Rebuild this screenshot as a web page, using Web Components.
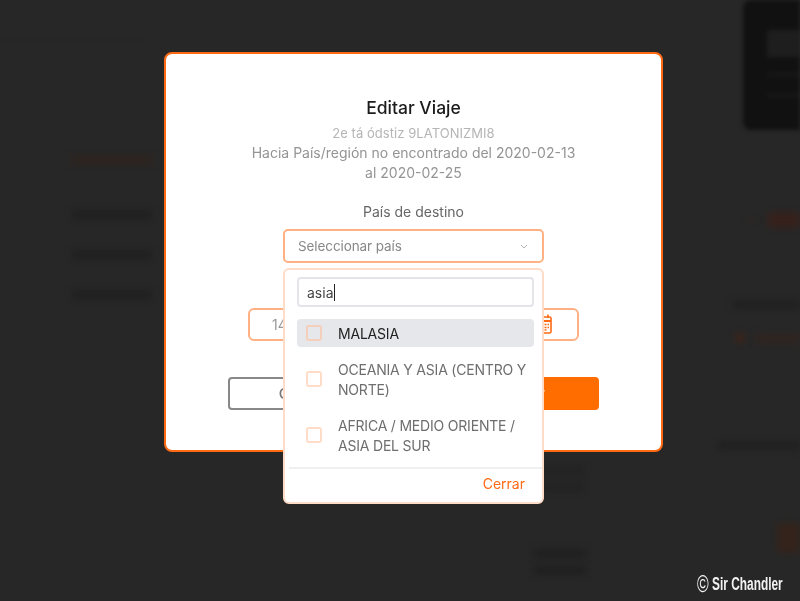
<!DOCTYPE html>
<html lang="es">
<head>
<meta charset="utf-8">
<title>Editar Viaje</title>
<style>
    html, body { margin: 0; height: 100%; background: #272727; overflow: hidden; }
    body { font-family: Inter, "Liberation Sans", sans-serif; }
</style>
</head>
<body>
<page-backdrop></page-backdrop>

<edit-trip-modal>
    <span slot="title">Editar Viaje</span>
    <span slot="who">2e tá ódstiz 9LATONIZMI8</span>
    <span slot="route">Hacia País/región no encontrado del 2020-02-13<br>al 2020-02-25</span>
    <span slot="label">País de destino</span>
    <country-select slot="select" placeholder="Seleccionar país" query="asia">
        <country-option active>MALASIA</country-option>
        <country-option>OCEANIA Y ASIA (CENTRO Y NORTE)</country-option>
        <country-option>AFRICA / MEDIO ORIENTE / ASIA DEL SUR</country-option>
    </country-select>
    <date-field slot="dates" value="14"></date-field>
    <trip-button slot="cancel">Cancelar</trip-button>
    <trip-button slot="save" primary>Guardar</trip-button>
</edit-trip-modal>

<photo-credit>Sir Chandler</photo-credit>

<script>
// Blurred page behind the dialog, only bars, no readable text
class PageBackdrop extends HTMLElement {
    constructor() {
        super();
        this.attachShadow({ mode: 'open' });
        this.shadowRoot.innerHTML = `
            <style>
                :host {
                    position: fixed;
                    inset: 0;
                    display: flex;
                    justify-content: space-between;
                    background: #272727;
                    overflow: hidden;
                }
                .bar { filter: blur(3px); background: #212121; }
                .left { width: 160px; padding: 39px 0 0 0; box-sizing: border-box; }
                .left .top { height: 2px; width: 145px; background: #252525; margin-bottom: 114px; filter: blur(1px); }
                .left .bar:not(.top) { height: 10px; width: 80px; margin: 0 0 30px 72px; }
                .left .brown { background: #2e2420; margin-bottom: 45px !important; }
                .mid { width: 50px; margin-left: auto; margin-right: 128px; padding-top: 466px; }
                .mid .bar { width: 44px; height: 9px; margin-bottom: 8px; background: #232323; }
                .mid .gap { margin-top: 57px; width: 52px; margin-left: -6px; background: #202020; }
                .right { width: 82px; position: relative; }
                .card {
                    width: 57px; height: 130px; margin-left: 25px; box-sizing: border-box;
                    background: #111; border-radius: 8px 0 0 8px; padding: 30px 0 0 24px;
                    filter: blur(2px);
                }
                .card div { height: 27px; background: #1e1e1e; margin-bottom: 16px; }
                .card p { height: 3px; background: #191919; margin: 0 0 18px; }
                .right .bar { height: 9px; margin-left: auto; }
                .r1row { display: flex; align-items: center; justify-content: flex-end; gap: 14px; margin-top: 82px; }
                .r1row .dot { width: 6px; height: 4px; margin: 0; background: #31231e; }
                .r1 { width: 32px; height: 16px !important; margin: 0 !important; background: #36211c !important; }
                .r2 { width: 67px; margin-top: 72px; }
                .r3row { display: flex; align-items: center; justify-content: flex-end; gap: 10px; margin-top: 24px; }
                .r3row .dot { width: 10px; height: 10px; margin: 0; background: #3a241b; }
                .r3 { width: 45px; margin: 0 !important; background: #302420 !important; }
                .r4 { width: 82px; margin-top: 98px; }
                .r5 { width: 23px; height: 30px !important; margin-top: 73px; background: #33231b !important; }
            </style>
            <div class="left">
                <div class="bar top"></div>
                <div class="bar brown"></div>
                <div class="bar"></div>
                <div class="bar"></div>
                <div class="bar"></div>
            </div>
            <div class="mid">
                <div class="bar"></div>
                <div class="bar"></div>
                <div class="bar gap"></div>
                <div class="bar" style="width:52px;margin-left:-6px;background:#202020"></div>
            </div>
            <div class="right">
                <div class="card"><div></div><p></p><p></p></div>
                <div class="r1row"><div class="bar dot"></div><div class="bar r1"></div></div>
                <div class="bar r2"></div>
                <div class="r3row"><div class="bar dot"></div><div class="bar r3"></div></div>
                <div class="bar r4"></div>
                <div class="bar r5"></div>
            </div>
        `;
    }
}

class EditTripModal extends HTMLElement {
    constructor() {
        super();
        this.attachShadow({ mode: 'open' });
        this.shadowRoot.innerHTML = `
            <style>
                :host {
                    position: absolute;
                    left: 164px;
                    top: 52px;
                    width: 499px;
                    height: 400px;
                    box-sizing: border-box;
                    display: flex;
                    flex-direction: column;
                    align-items: center;
                    padding-top: 42px;
                    background: #fff;
                    border: 2px solid #ff6a13;
                    border-radius: 8px;
                    text-align: center;
                    color: #666;
                    filter: blur(0.3px);
                }
                .title { font-size: 17.5px; font-weight: 500; line-height: 24px; color: #1b1b1b; }
                .who { font-size: 13px; letter-spacing: 0.05px; line-height: 20px; color: #b5b5b5; margin-top: 3px; }
                .route { font-size: 14px; line-height: 20px; color: #949494; }
                .label { font-size: 14px; line-height: 20px; color: #666; margin-top: 19px; }
                .select { margin-top: 7px; }
                .dates { margin-top: 45px; }
                .buttons { display: flex; gap: 35px; margin-top: 36px; }
            </style>
            <div class="title"><slot name="title"></slot></div>
            <div class="who"><slot name="who"></slot></div>
            <div class="route"><slot name="route"></slot></div>
            <div class="label"><slot name="label"></slot></div>
            <div class="select"><slot name="select"></slot></div>
            <div class="dates"><slot name="dates"></slot></div>
            <div class="buttons">
                <slot name="cancel"></slot>
                <slot name="save"></slot>
            </div>
        `;
    }
}

class CountrySelect extends HTMLElement {
    constructor() {
        super();
        this.attachShadow({ mode: 'open' });
        const placeholder = this.getAttribute('placeholder');
        const query = this.getAttribute('query');
        this.shadowRoot.innerHTML = `
            <style>
                :host { display: block; position: relative; width: 261px; text-align: left; }
                .box {
                    height: 34px;
                    box-sizing: border-box;
                    display: flex;
                    align-items: center;
                    justify-content: space-between;
                    padding: 0 13px 0 13px;
                    border: 2px solid #ffb183;
                    border-radius: 5px;
                    font-size: 13.5px;
                    letter-spacing: -0.1px;
                    color: #888;
                }
                .box svg { display: block; }
                .menu {
                    position: absolute;
                    z-index: 2;
                    left: 0;
                    top: 39px;
                    width: 261px;
                    height: 236px;
                    box-sizing: border-box;
                    display: flex;
                    flex-direction: column;
                    padding-top: 7px;
                    background: #fff;
                    border: 2px solid #ffdcc8;
                    border-radius: 6px;
                }
                .search {
                    height: 30px;
                    box-sizing: border-box;
                    margin: 0 8px 12px 12px;
                    padding-left: 8px;
                    display: flex;
                    align-items: center;
                    border: 2px solid #e3e5e9;
                    border-radius: 4px;
                    font-size: 14px;
                    color: #444;
                }
                .caret { width: 1px; height: 17px; background: #222; }
                .list { display: flex; flex-direction: column; gap: 8px; margin: 0 8px 0 12px; flex: 1; }
                .foot {
                    margin-left: 4px;
                    height: 35px;
                    box-sizing: border-box;
                    padding: 0 17px 4px 0;
                    border-top: 2px solid #eeeff1;
                    display: flex;
                    align-items: center;
                    justify-content: flex-end;
                    font-size: 14px;
                    color: #ff6a13;
                }
            </style>
            <div class="box">
                <span>${placeholder}</span>
                <svg width="10" height="10" viewBox="0 0 10 10" fill="none" stroke="#b4b4b4" stroke-width="1">
                    <path d="M2 4l3 3 3-3"/>
                </svg>
            </div>
            <div class="menu">
                <div class="search"><span>${query}</span><span class="caret"></span></div>
                <div class="list"><slot></slot></div>
                <div class="foot">Cerrar</div>
            </div>
        `;
    }
}

class CountryOption extends HTMLElement {
    constructor() {
        super();
        this.attachShadow({ mode: 'open' });
        this.shadowRoot.innerHTML = `
            <style>
                :host {
                    display: flex;
                    align-items: center;
                    gap: 16px;
                    padding: 4px 0 4px 9px;
                    border-radius: 4px;
                    font-size: 14px;
                    line-height: 20px;
                    letter-spacing: -0.2px;
                    color: #6e6e6e;
                }
                :host([active]) { background: #e5e7eb; color: #222; }
                .check {
                    flex: none;
                    width: 16px;
                    height: 16px;
                    box-sizing: border-box;
                    border: 2px solid #ffdcc8;
                    border-radius: 3px;
                }
                :host([active]) .check { border-color: #f5cfb9; }
                .text { padding-top: 1px; margin-bottom: -1px; }
            </style>
            <span class="check"></span>
            <span class="text"><slot></slot></span>
        `;
    }
}

class DateField extends HTMLElement {
    constructor() {
        super();
        this.attachShadow({ mode: 'open' });
        this.shadowRoot.innerHTML = `
            <style>
                :host {
                    display: flex;
                    align-items: center;
                    justify-content: space-between;
                    width: 331px;
                    height: 33px;
                    box-sizing: border-box;
                    padding: 0 25px 0 22px;
                    border: 2px solid #ffb183;
                    border-radius: 6px;
                    font-size: 14px;
                    color: #999;
                }
                svg { display: block; margin-top: -2px; }
            </style>
            <span>${this.getAttribute('value')}</span>
            <svg width="14" height="20" viewBox="0 0 14 20" fill="none" stroke="#ff6a13" stroke-width="1.6">
                <path d="M4 0.5v3.5M10 0.5v3.5"/>
                <rect x="1" y="3" width="12" height="16" rx="1.5"/>
                <path d="M1 7h12" stroke-width="2"/>
                <path d="M3.5 10.5h2M6.5 10.5h2M9.5 10.5h1.5M3.5 13.5h2M6.5 13.5h2M9.5 13.5h1.5M3.5 16h2M6.5 16h2" stroke-width="1.5"/>
            </svg>
        `;
    }
}

class TripButton extends HTMLElement {
    constructor() {
        super();
        this.attachShadow({ mode: 'open' });
        this.shadowRoot.innerHTML = `
            <style>
                :host {
                    display: flex;
                    align-items: center;
                    justify-content: center;
                    width: 168px;
                    height: 33px;
                    box-sizing: border-box;
                    border: 2px solid #888;
                    border-radius: 4px;
                    font-size: 15px;
                    font-weight: 500;
                    letter-spacing: 0.3px;
                    color: #777;
                }
                :host([primary]) { background: #ff6c00; border-color: #ff6c00; color: #fff; }
            </style>
            <slot></slot>
        `;
    }
}

class PhotoCredit extends HTMLElement {
    constructor() {
        super();
        this.attachShadow({ mode: 'open' });
        this.shadowRoot.innerHTML = `
            <style>
                :host {
                    position: absolute;
                    right: 17px;
                    bottom: 6px;
                    display: flex;
                    align-items: center;
                    gap: 5px;
                    height: 22px;
                    font-family: "Liberation Sans", sans-serif;
                    font-size: 18px;
                    font-weight: 700;
                    color: #f2f2f2;
                    transform: scaleX(0.66);
                    transform-origin: right center;
                    white-space: nowrap;
                }
                .mark { font-size: 24px; font-weight: 400; line-height: 22px; }
            </style>
            <span class="mark">©</span><slot></slot>
        `;
    }
}

customElements.define('page-backdrop', PageBackdrop);
customElements.define('edit-trip-modal', EditTripModal);
customElements.define('country-select', CountrySelect);
customElements.define('country-option', CountryOption);
customElements.define('date-field', DateField);
customElements.define('trip-button', TripButton);
customElements.define('photo-credit', PhotoCredit);
</script>
</body>
</html>
